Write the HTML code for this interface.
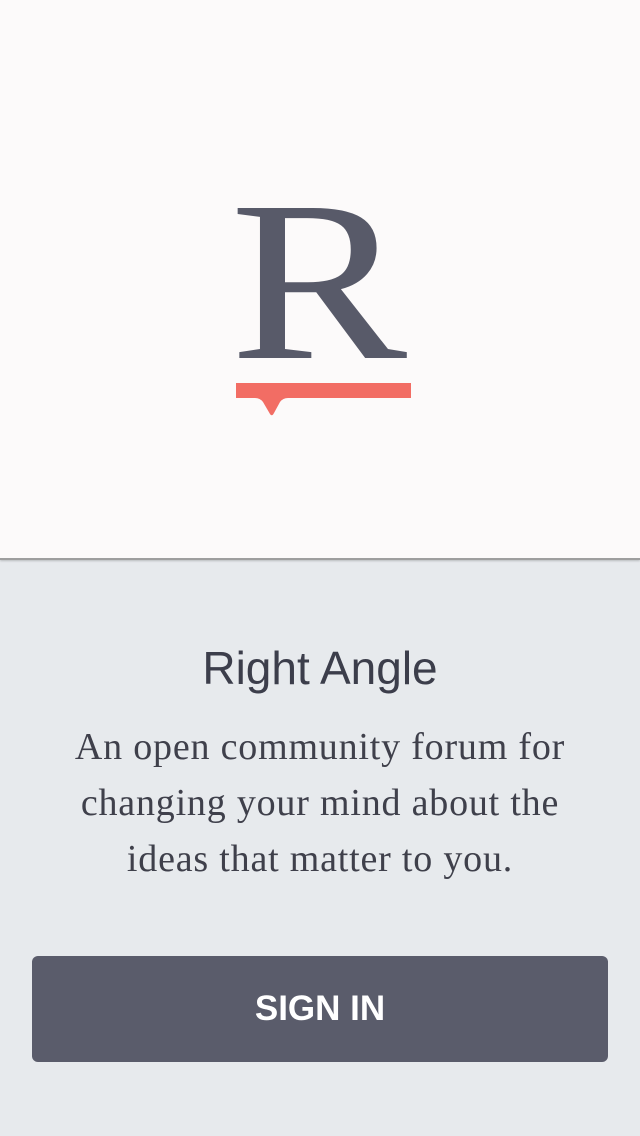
<!DOCTYPE html>
<html><head><meta charset="utf-8"><style>
html,body{margin:0;padding:0;width:640px;height:1136px;overflow:hidden;background:#e7eaed}
.top{position:absolute;left:0;top:0;width:640px;height:558px;background:#fcfafa;border-bottom:2px solid #9e9e9e;box-shadow:0 1px 2px rgba(0,0,0,.2)}
.R{position:absolute;left:230px;top:131px;font-family:"Liberation Serif",serif;font-size:229px;line-height:300px;color:#585a69;transform:scaleX(1.16);transform-origin:left top}
.t{position:absolute;top:640px;width:640px;text-align:center;font-family:"Liberation Sans",sans-serif;font-size:46px;color:#3c3e4b;line-height:56px}
.d{position:absolute;top:719px;width:640px;text-align:center;font-family:"Liberation Serif",serif;font-size:38px;letter-spacing:0.8px;color:#3f404b;line-height:56px}
.b{position:absolute;left:32px;top:956px;width:576px;height:106px;background:#5a5c6b;border-radius:6px;color:#fff;font-family:"Liberation Sans",sans-serif;font-weight:bold;font-size:35px;line-height:106px;text-align:center}
</style></head><body>
<div class="top">
<div class="R">R</div>
<svg style="position:absolute;left:236px;top:383px" width="176" height="36"><path d="M0 0H175V15H52Q47 15 44 19L38 30Q36 34 34 31L27 19Q24 15 19 15H0Z" fill="#f26d64"/></svg>
</div>
<div class="t">Right Angle</div>
<div class="d">An open community forum for<br>changing your mind about the<br>ideas that matter to you.</div>
<div class="b">SIGN IN</div>
</body></html>
